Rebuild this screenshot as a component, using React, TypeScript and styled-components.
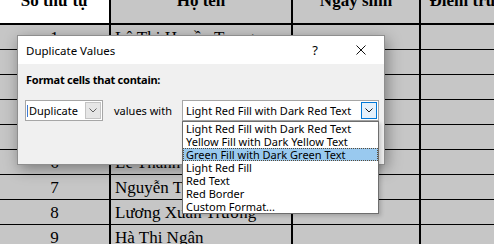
import styled, { createGlobalStyle } from 'styled-components';

const GlobalStyle = createGlobalStyle`
  html, body {
    margin: 0;
    padding: 0;
    overflow: hidden;
    background: #c6c6c6;
  }
`;

const Page = styled.div`
  position: relative;
  width: 494px;
  height: 244px;
  overflow: hidden;
`;

const Sheet = styled.div`
  display: grid;
  grid-template-columns: 111px 182px 128px 140px;
  grid-auto-rows: 25px;
  font-family: "Liberation Serif", "Times New Roman", serif;
  font-size: 17px;
  color: #000;
`;

const Cell = styled.div<{ $head?: boolean; $white?: boolean; $left?: boolean }>`
  box-sizing: border-box;
  display: flex;
  align-items: ${(p) => (p.$head ? 'flex-start' : 'center')};
  justify-content: ${(p) => (p.$left ? 'flex-start' : 'center')};
  padding-left: ${(p) => (p.$left ? '4px' : '0')};
  border-right: 2px solid #000;
  border-bottom: ${(p) => (p.$head ? '2px' : '1px')} solid #000;
  background: ${(p) => (p.$white ? '#fff' : '#c6c6c6')};
  font-weight: ${(p) => (p.$head ? 700 : 400)};
  line-height: ${(p) => (p.$head ? '20px' : '1')};
  white-space: nowrap;
  overflow: hidden;

  span {
    margin-top: ${(p) => (p.$head ? '-9px' : '0')};
  }
`;

const Dialog = styled.div`
  position: absolute;
  left: 17px;
  top: 35px;
  width: 368px;
  height: 130px;
  box-sizing: border-box;
  border: 1px solid #8e8e8e;
  background: #f0f0f0;
  box-shadow: 2px 4px 14px rgba(0, 0, 0, 0.38);
  font-family: "Noto Sans", "Open Sans", sans-serif;
  font-size: 11px;
  color: #000;
`;

const TitleBar = styled.div`
  display: flex;
  align-items: center;
  height: 28px;
  background: #fff;
  padding-left: 8px;
  font-size: 11.5px;
`;

const Title = styled.div`
  flex: 1;
`;

const TitleButton = styled.div`
  width: 46px;
  height: 28px;
  display: flex;
  align-items: center;
  justify-content: center;
  font-size: 13px;
`;

const Body = styled.div`
  padding: 8px 5px 0 7px;
`;

const Heading = styled.div`
  font-weight: 700;
  line-height: 16px;
  letter-spacing: -0.25px;
  margin-bottom: 12px;
  padding-left: 1px;
`;

const Row = styled.div`
  display: flex;
  align-items: center;
  height: 21px;
`;

const Combo = styled.div<{ $width: number }>`
  position: relative;
  box-sizing: border-box;
  width: ${(p) => p.$width}px;
  height: 21px;
  display: flex;
  align-items: center;
  background: #fff;
  border: 1px solid #a6a6a6;
  padding-left: 3px;
`;

const ComboText = styled.div<{ $caret?: boolean }>`
  flex: 1;
  position: relative;
  line-height: 16px;
  white-space: nowrap;

  &::before {
    content: '';
    display: ${(p) => (p.$caret ? 'block' : 'none')};
    position: absolute;
    left: -2px;
    top: 2px;
    width: 1px;
    height: 12px;
    background: #3d7bd6;
  }
`;

const DropButton = styled.div<{ $active?: boolean }>`
  box-sizing: border-box;
  width: 16px;
  height: 17px;
  margin-right: 1px;
  display: flex;
  align-items: center;
  justify-content: center;
  background: ${(p) => (p.$active ? '#e5f1fb' : '#e6e6e6')};
  border: 1px solid ${(p) => (p.$active ? '#0078d7' : '#c4c4c4')};
`;

const Label = styled.div`
  flex: 1;
  padding-left: 11px;
  white-space: nowrap;
`;

const List = styled.div`
  position: absolute;
  left: -1px;
  top: 20px;
  width: 197px;
  box-sizing: border-box;
  border: 1px solid #6e6e6e;
  background: #fff;
  box-shadow: 2px 2px 4px rgba(0, 0, 0, 0.18);
  z-index: 2;
`;

const Item = styled.div<{ $selected?: boolean }>`
  box-sizing: border-box;
  height: 13px;
  line-height: 13px;
  padding-left: 3px;
  white-space: nowrap;
  background: ${(p) => (p.$selected ? '#99c9ef' : 'transparent')};
  outline: ${(p) => (p.$selected ? '1px dotted #5b4a35' : 'none')};
  outline-offset: -1px;
`;

function Chevron({ color }: { color: string }) {
  return (
    <svg width="8" height="5" viewBox="0 0 8 5">
      <polyline points="0.5,0.5 4,4 7.5,0.5" fill="none" stroke={color} strokeWidth="1" />
    </svg>
  );
}

const headers = ['Số thứ tự', 'Họ tên', 'Ngày sinh', 'Điểm trung bình'];

const students = [
  'Lê Thị Huyền Trang',
  'Nguyễn Văn An',
  'Trần Thị Bình',
  'Phạm Minh Châu',
  'Đỗ Văn Dũng',
  'Lê Thanh Hương',
  'Nguyễn Thị Hoa',
  'Lương Xuân Trường',
  'Hà Thị Ngân',
];

const formats = [
  'Light Red Fill with Dark Red Text',
  'Yellow Fill with Dark Yellow Text',
  'Green Fill with Dark Green Text',
  'Light Red Fill',
  'Red Text',
  'Red Border',
  'Custom Format...',
];

export default function App() {
  return (
    <Page>
      <GlobalStyle />
      <Sheet>
        {headers.map((h, i) => (
          <Cell key={h} $head $white={i === 0}>
            <span>{h}</span>
          </Cell>
        ))}
        {students.map((name, i) => [
          <Cell key={`n${i}`}>{i + 1}</Cell>,
          <Cell key={`h${i}`} $left>{name}</Cell>,
          <Cell key={`d${i}`} />,
          <Cell key={`s${i}`} />,
        ])}
      </Sheet>

      <Dialog>
        <TitleBar>
          <Title>Duplicate Values</Title>
          <TitleButton>?</TitleButton>
          <TitleButton>
            <svg width="10" height="10" viewBox="0 0 10 10">
              <path d="M0.5 0.5 L9.5 9.5 M9.5 0.5 L0.5 9.5" stroke="#111" strokeWidth="1" />
            </svg>
          </TitleButton>
        </TitleBar>
        <Body>
          <Heading>Format cells that contain:</Heading>
          <Row>
            <Combo $width={78}>
              <ComboText $caret>Duplicate</ComboText>
              <DropButton>
                <Chevron color="#606060" />
              </DropButton>
            </Combo>
            <Label>values with</Label>
            <Combo $width={197}>
              <ComboText>Light Red Fill with Dark Red Text</ComboText>
              <DropButton $active>
                <Chevron color="#1a1a1a" />
              </DropButton>
              <List>
                {formats.map((f, i) => (
                  <Item key={f} $selected={i === 2}>
                    {f}
                  </Item>
                ))}
              </List>
            </Combo>
          </Row>
        </Body>
      </Dialog>
    </Page>
  );
}
